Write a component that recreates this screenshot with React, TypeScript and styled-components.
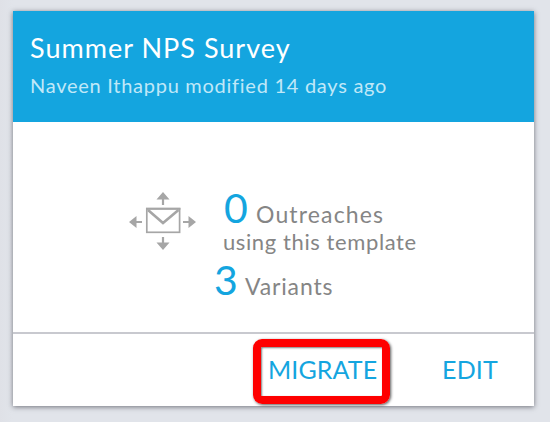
import React from "react";
import styled, { createGlobalStyle } from "styled-components";

const GlobalStyle = createGlobalStyle`
  * { box-sizing: border-box; }
  body {
    margin: 0;
    background: #e1e4ea;
    font-family: Lato, "Open Sans", sans-serif;
    overflow: hidden;
  }
`;

const Page = styled.main`
  height: 422px;
  padding: 11px 16px 16px 13px;
  background: linear-gradient(90deg, #dfe1e7 0, #e1e4ea 13px);
`;

const Card = styled.article`
  height: 395px;
  display: flex;
  flex-direction: column;
  background: #fff;
  box-shadow: 0 1px 5px rgba(40, 40, 50, 0.6);
`;

const Header = styled.header`
  height: 111px;
  padding: 21px 17px 0;
  background: #14a5df;
`;

const Line = styled.div<{ $size: number; $spacing: number }>`
  font-size: ${(p) => p.$size}px;
  letter-spacing: ${(p) => p.$spacing}px;
  white-space: nowrap;
`;

const Title = styled(Line)`
  line-height: 32px;
  color: #fff;
`;

const Subtitle = styled(Line)`
  margin-top: 7px;
  line-height: 28px;
  color: #c0e8f8;
`;

const Body = styled.section`
  height: 210px;
  display: flex;
  padding: 66px 0 0 115px;
`;

const Icon = styled.svg`
  width: 70px;
  height: 62px;
  margin-top: 2px;
  flex: none;
`;

const Stats = styled.div`
  padding-left: 16px;
`;

const Stat = styled.div<{ $indent: number }>`
  display: flex;
  align-items: baseline;
  height: 40px;
  margin-left: ${(p) => p.$indent}px;
`;

const Count = styled.span<{ $width: number }>`
  width: ${(p) => p.$width}px;
  font-size: 41px;
  line-height: 40px;
  color: #14a5df;
`;

const Label = styled(Line)`
  line-height: 27px;
  color: #858585;
`;

const Note = styled(Label)`
  margin: 0 0 5px 9px;
`;

const Footer = styled.footer`
  height: 74px;
  display: flex;
  align-items: flex-start;
  padding-left: 240px;
  border-top: 2px solid #c8c9cf;
`;

const Action = styled.button<{ $marked?: boolean; $spacing: number }>`
  width: ${(p) => (p.$marked ? 137 : 90)}px;
  height: 65px;
  margin: 5px 0 0 ${(p) => (p.$marked ? 0 : 27)}px;
  padding: 0 0 5px ${(p) => (p.$marked ? 7 : 17)}px;
  border: 8px solid ${(p) => (p.$marked ? "#fe0000" : "transparent")};
  border-radius: 9px;
  background: none;
  box-shadow: ${(p) =>
    p.$marked
      ? "1px 1px 3px rgba(0,0,0,.65), inset 1px 1px 2px rgba(0,0,0,.5)"
      : "none"};
  color: #14a5df;
  font: 25px/44px Lato, sans-serif;
  letter-spacing: ${(p) => p.$spacing}px;
  text-align: left;
  white-space: nowrap;
`;

export default function App() {
  return (
    <>
      <GlobalStyle />
      <Page>
        <Card>
          <Header>
            <Title $size={27} $spacing={1.02}>Summer NPS Survey</Title>
            <Subtitle $size={20} $spacing={0.73}>
              Naveen Ithappu modified 14 days ago
            </Subtitle>
          </Header>
          <Body>
            <Icon viewBox="0 0 70 62" fill="none" stroke="#a6a6a6">
              <rect x="18.8" y="18.7" width="32.8" height="23.6" strokeWidth="1.7" />
              <path d="M18 18.8H52.4" strokeWidth="2" />
              <path d="M20 20L35 33L50.5 20" strokeWidth="2.6" />
              <path d="M35 7V15M35 47V55M6 32H14M55 32H63" strokeWidth="2.2" />
              <path
                d="M35 2L41.5 9.5H28.5ZM35 60L41.5 52.5H28.5ZM1 32L8.5 26V38ZM68 32L60.5 26V38Z"
                fill="#a6a6a6"
                stroke="none"
              />
            </Icon>
            <Stats>
              <Stat $indent={10}>
                <Count $width={32}>0</Count>
                <Label $size={23} $spacing={1.15}>Outreaches</Label>
              </Stat>
              <Note $size={22} $spacing={0.6}>using this template</Note>
              <Stat $indent={0}>
                <Count $width={31}>3</Count>
                <Label $size={23} $spacing={0.85}>Variants</Label>
              </Stat>
            </Stats>
          </Body>
          <Footer>
            <Action $marked $spacing={0.1}>MIGRATE</Action>
            <Action $spacing={0.2}>EDIT</Action>
          </Footer>
        </Card>
      </Page>
    </>
  );
}
